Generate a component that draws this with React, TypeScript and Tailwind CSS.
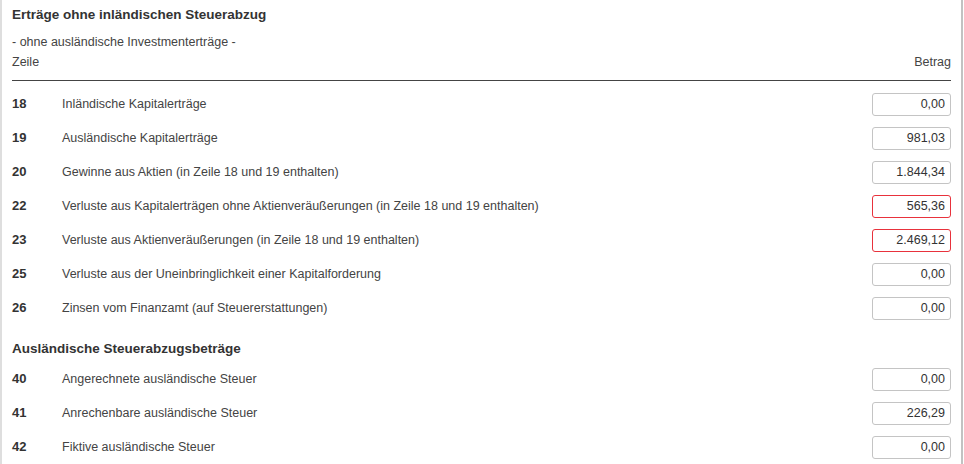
import React from 'react';

type Row = { nr: string; label: string; value: string; error?: boolean };

const inlandRows: Row[] = [
  { nr: '18', label: 'Inländische Kapitalerträge', value: '0,00' },
  { nr: '19', label: 'Ausländische Kapitalerträge', value: '981,03' },
  { nr: '20', label: 'Gewinne aus Aktien (in Zeile 18 und 19 enthalten)', value: '1.844,34' },
  {
    nr: '22',
    label: 'Verluste aus Kapitalerträgen ohne Aktienveräußerungen (in Zeile 18 und 19 enthalten)',
    value: '565,36',
    error: true,
  },
  { nr: '23', label: 'Verluste aus Aktienveräußerungen (in Zeile 18 und 19 enthalten)', value: '2.469,12', error: true },
  { nr: '25', label: 'Verluste aus der Uneinbringlichkeit einer Kapitalforderung', value: '0,00' },
  { nr: '26', label: 'Zinsen vom Finanzamt (auf Steuererstattungen)', value: '0,00' },
];

const auslandRows: Row[] = [
  { nr: '40', label: 'Angerechnete ausländische Steuer', value: '0,00' },
  { nr: '41', label: 'Anrechenbare ausländische Steuer', value: '226,29' },
  { nr: '42', label: 'Fiktive ausländische Steuer', value: '0,00' },
];

const FormRow: React.FC<{ row: Row }> = ({ row }) => (
  <div className="flex h-[34px] items-center">
    <div className="w-[50px] text-[13px] font-bold text-[#333]">{row.nr}</div>
    <div className="flex-1 text-[12.5px] text-[#444]">{row.label}</div>
    <input
      type="text"
      readOnly
      value={row.value}
      className={
        row.error
          ? 'h-[23px] w-[79px] rounded-[3px] border border-[#e8323c] bg-white px-[5px] text-right text-[12.5px] text-[#333] outline-none'
          : 'h-[23px] w-[79px] rounded-[3px] border border-[#c4c4c4] bg-white px-[5px] text-right text-[12.5px] text-[#333] outline-none'
      }
    />
  </div>
);

const App: React.FC = () => {
  return (
    <div
      className="h-[464px] w-[963px] overflow-hidden border-l-2 border-r-2 border-l-[#dedede] border-r-[#c2c2c2] bg-white px-[10px] text-[#333]"
      style={{ fontFamily: '"Liberation Sans", Arial, sans-serif' }}
    >
      {/* Erträge ohne inländischen Steuerabzug */}
      <h2 className="mt-[5px] h-[20px] text-[13.5px] font-bold leading-[20px] text-[#333]">
        Erträge ohne inländischen Steuerabzug
      </h2>
      <p className="mt-[7px] h-[20px] text-[12.5px] leading-[20px] text-[#444]">- ohne ausländische Investmenterträge -</p>
      <div className="flex h-[20px] justify-between text-[12.5px] leading-[20px] text-[#444]">
        <span>Zeile</span>
        <span>Betrag</span>
      </div>
      <div className="mt-[8px] h-px bg-[#444]" />
      <div className="mt-[6px]">
        {inlandRows.map((row) => (
          <FormRow key={row.nr} row={row} />
        ))}
      </div>

      {/* Ausländische Steuerabzugsbeträge */}
      <h2 className="mt-[14px] h-[20px] text-[13.5px] font-bold leading-[20px] text-[#333]">
        Ausländische Steuerabzugsbeträge
      </h2>
      <div className="mt-[3px]">
        {auslandRows.map((row) => (
          <FormRow key={row.nr} row={row} />
        ))}
      </div>
    </div>
  );
};

export default App;
